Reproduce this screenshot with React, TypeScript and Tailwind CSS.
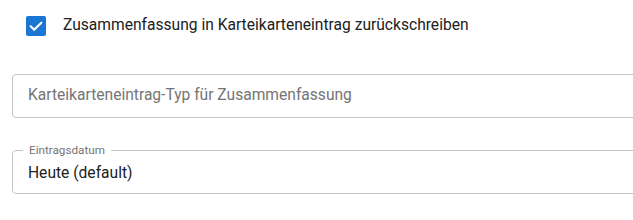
export default function App() {
  return (
    <div
      className="w-[633px] h-[220px] bg-white overflow-hidden"
      style={{ fontFamily: "Roboto, 'Noto Sans', sans-serif" }}
    >
      <div className="flex items-center pl-[26px] pt-[16px] h-[20px] box-content">
        <div className="w-[20px] h-[20px] rounded-[2px] bg-[#1976d2] flex items-center justify-center">
          <svg width="16" height="16" viewBox="0 0 24 24">
            <path d="M4 12.5l5.2 5.2L20 7" fill="none" stroke="white" strokeWidth="3.2" strokeLinecap="round" strokeLinejoin="round" />
          </svg>
        </div>
        <span className="ml-[17px] text-[15.6px] text-[#212121] leading-none">
          Zusammenfassung in Karteikarteneintrag zurückschreiben
        </span>
      </div>

      <div className="ml-[12px] w-[640px] mt-[38px] h-[44px] border border-[#c4c4c4] rounded-[4px] flex items-center pl-[15px]">
        <span className="text-[15.6px] text-[#757575]">Karteikarteneintrag-Typ für Zusammenfassung</span>
      </div>

      <fieldset className="ml-[12px] w-[640px] mt-[25px] h-[51px] border border-[#c4c4c4] rounded-[4px] pl-[10px] pr-0 m-0">
        <legend className="px-[6px] text-[11.7px] text-[#757575] leading-[14px]">Eintragsdatum</legend>
        <div className="pl-[5px] pt-[6px] text-[15.6px] text-[#212121] leading-[20px]">Heute (default)</div>
      </fieldset>
    </div>
  );
}
